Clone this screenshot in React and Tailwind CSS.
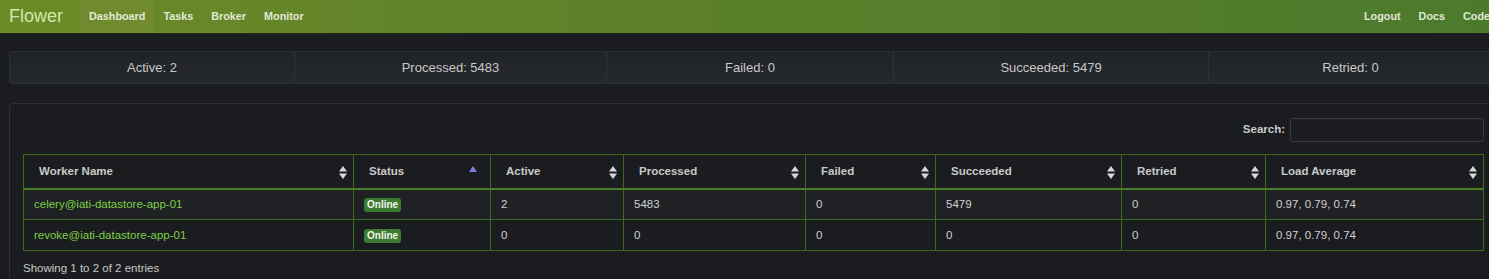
import React from 'react';

const stats = [
    { label: 'Active', value: 2, w: 'w-[284px]' },
    { label: 'Processed', value: 5483, w: 'w-[312px]' },
    { label: 'Failed', value: 0, w: 'w-[287px]' },
    { label: 'Succeeded', value: 5479, w: 'w-[315px]' },
    { label: 'Retried', value: 0, w: 'w-[284px]' },
];

const columns = [
    { name: 'Worker Name', w: 'w-[330px]' },
    { name: 'Status', w: 'w-[137px]', sorted: true },
    { name: 'Active', w: 'w-[133px]' },
    { name: 'Processed', w: 'w-[182px]' },
    { name: 'Failed', w: 'w-[130px]' },
    { name: 'Succeeded', w: 'w-[186px]' },
    { name: 'Retried', w: 'w-[144px]' },
    { name: 'Load Average', w: 'w-[218px]' },
];

const workers = [
    { name: 'celery@iati-datastore-app-01', active: 2, processed: 5483, failed: 0, succeeded: 5479, retried: 0, load: '0.97, 0.79, 0.74' },
    { name: 'revoke@iati-datastore-app-01', active: 0, processed: 0, failed: 0, succeeded: 0, retried: 0, load: '0.97, 0.79, 0.74' },
];

// double arrow sort icon (both), or single up arrow when sorted
const SortIcon = ({ sorted }) => {
    if (sorted) {
        return (
            <svg width="8" height="8" viewBox="0 0 8 8" className="absolute right-[13px] top-[10px]">
                <path d="M0 7 L4 1 L8 7 Z" fill="#7c7fdc" />
            </svg>
        );
    }
    return (
        <svg width="8" height="13" viewBox="0 0 8 13" className="absolute right-[6px] top-[11px]">
            <path d="M0 5.5 L4 0 L8 5.5 Z" fill="#d8d8d8" />
            <path d="M0 7.5 L4 13 L8 7.5 Z" fill="#d8d8d8" />
        </svg>
    );
};

export default function App() {
    return (
        <div className="w-[1489px] h-[279px] overflow-hidden bg-[#1b1c1f]" style={{ fontFamily: '"Liberation Sans", Arial, sans-serif' }}>
            {/* navbar */}
            <div className="h-[34px] flex items-stretch bg-gradient-to-r from-[#6c8a27] via-[#5a7f2a] to-[#4c7a2c] border-b border-[#23261c]">
                <div className="pl-[9px] pr-[17px] flex items-center text-[18px] text-[#cfeaa8]">Flower</div>
                <div className="flex items-stretch text-[10.8px] font-bold text-[#e2e8d6]">
                    <div className="px-[9px] flex items-center bg-[#6f8b2d]">Dashboard</div>
                    <div className="px-[9px] flex items-center">Tasks</div>
                    <div className="px-[9px] flex items-center">Broker</div>
                    <div className="px-[9px] flex items-center">Monitor</div>
                </div>
                <div className="ml-auto flex items-stretch text-[10.8px] font-bold text-[#e2e8d6] -mr-[10px]">
                    <div className="px-[9px] flex items-center">Logout</div>
                    <div className="px-[9px] flex items-center">Docs</div>
                    <div className="px-[9px] flex items-center">Code</div>
                </div>
            </div>

            {/* stats well */}
            <div className="mt-[17px] ml-[9px] w-[1500px] h-[33px] flex rounded-[3px] border border-[#2c2f33] bg-gradient-to-b from-[#202327] to-[#25292d] text-[13px] text-[#c8c8c8]">
                {stats.map((s, i) => (
                    <div key={s.label} className={`${s.w} shrink-0 flex items-center justify-center ${i > 0 ? 'border-l border-[#2f3236]' : ''}`}>
                        {s.label}: {s.value}
                    </div>
                ))}
            </div>

            {/* panel */}
            <div className="mt-[19px] ml-[9px] w-[1490px] h-[200px] rounded-[4px] border border-[#2e3034] bg-[#1b1c1f] pl-[13px] pt-[14px]">
                <div className="w-[1461px] flex justify-end items-center gap-[5px] text-[11.5px] font-bold text-[#c8c8c8]">
                    <span>Search:</span>
                    <div className="w-[194px] h-[24px] rounded-[3px] border border-[#3a3c40] bg-[#1b1c1f]" />
                </div>

                <table className="mt-[12px] w-[1461px] table-fixed border-collapse">
                    <thead>
                        <tr className="h-[34px]">
                            {columns.map((c) => (
                                <th key={c.name} className={`${c.w} relative border border-[#3a6b1c] border-b-2 border-b-[#4a7d24] text-left pl-[15px] text-[11.5px] font-bold text-[#c9c9c9]`}>
                                    {c.name}
                                    <SortIcon sorted={c.sorted} />
                                </th>
                            ))}
                        </tr>
                    </thead>
                    <tbody>
                        {workers.map((w, i) => (
                            <tr key={w.name} className={`h-[31px] text-[11.5px] text-[#d0d0d0] ${i === 0 ? 'bg-[#1f2124]' : 'bg-[#1b1c1f]'}`}>
                                <td className="border border-[#3a6b1c] pl-[10px] pt-[1px] text-[#7ccf45]">{w.name}</td>
                                <td className="border border-[#3a6b1c] pl-[10px] pt-[1px]">
                                    <span className="inline-block rounded-[3px] bg-[#3c7a32] px-[3px] py-[1px] text-[10px] font-bold leading-[12px] text-[#eef5ea]">Online</span>
                                </td>
                                <td className="border border-[#3a6b1c] pl-[10px] pt-[1px]">{w.active}</td>
                                <td className="border border-[#3a6b1c] pl-[10px] pt-[1px]">{w.processed}</td>
                                <td className="border border-[#3a6b1c] pl-[10px] pt-[1px]">{w.failed}</td>
                                <td className="border border-[#3a6b1c] pl-[10px] pt-[1px]">{w.succeeded}</td>
                                <td className="border border-[#3a6b1c] pl-[10px] pt-[1px]">{w.retried}</td>
                                <td className="border border-[#3a6b1c] pl-[10px] pt-[1px]">{w.load}</td>
                            </tr>
                        ))}
                    </tbody>
                </table>

                <div className="mt-[9px] text-[11.5px] text-[#c8c8c8]">Showing 1 to 2 of 2 entries</div>
            </div>
        </div>
    );
}
